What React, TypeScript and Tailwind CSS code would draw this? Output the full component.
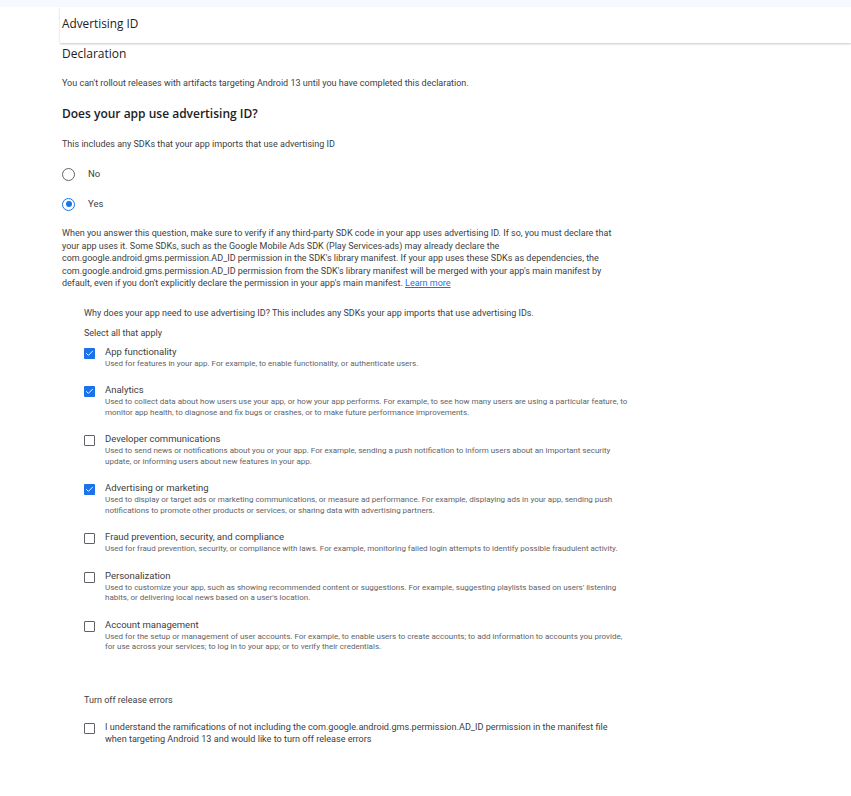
import { Check } from "lucide-react"

interface Purpose {
  title: string
  desc: string
  checked: boolean
}

const purposes: Purpose[] = [
  {
    title: "App functionality",
    desc: "Used for features in your app. For example, to enable functionality, or authenticate users.",
    checked: true,
  },
  {
    title: "Analytics",
    desc: "Used to collect data about how users use your app, or how your app performs. For example, to see how many users are using a particular feature, to monitor app health, to diagnose and fix bugs or crashes, or to make future performance improvements.",
    checked: true,
  },
  {
    title: "Developer communications",
    desc: "Used to send news or notifications about you or your app. For example, sending a push notification to inform users about an important security update, or informing users about new features in your app.",
    checked: false,
  },
  {
    title: "Advertising or marketing",
    desc: "Used to display or target ads or marketing communications, or measure ad performance. For example, displaying ads in your app, sending push notifications to promote other products or services, or sharing data with advertising partners.",
    checked: true,
  },
  {
    title: "Fraud prevention, security, and compliance",
    desc: "Used for fraud prevention, security, or compliance with laws. For example, monitoring failed login attempts to identify possible fraudulent activity.",
    checked: false,
  },
  {
    title: "Personalization",
    desc: "Used to customize your app, such as showing recommended content or suggestions. For example, suggesting playlists based on users' listening habits, or delivering local news based on a user's location.",
    checked: false,
  },
  {
    title: "Account management",
    desc: "Used for the setup or management of user accounts. For example, to enable users to create accounts; to add information to accounts you provide, for use across your services; to log in to your app; or to verify their credentials.",
    checked: false,
  },
]

function Box({ checked }: { checked: boolean }) {
  return checked ? (
    <span className="w-[11px] h-[11px] rounded-[1px] bg-[#1a73e8] flex items-center justify-center shrink-0 mt-[2px]">
      <Check size={9} strokeWidth={2.5} className="text-white" />
    </span>
  ) : (
    <span className="w-[11px] h-[11px] rounded-[1px] border-[1.5px] border-[#5f6368] shrink-0 mt-[2px]" />
  )
}

function Radio({ checked, label }: { checked: boolean; label: string }) {
  return (
    <div className="flex items-center h-[30px]">
      <span
        className={`w-[13px] h-[13px] rounded-full border-[1.5px] flex items-center justify-center ml-[62px] ${
          checked ? "border-[#1a73e8]" : "border-[#5f6368]"
        }`}
      >
        {checked && <span className="w-[6px] h-[6px] rounded-full bg-[#1a73e8]" />}
      </span>
      <span className="ml-[13px] text-[9.5px] text-[#3c4043]">{label}</span>
    </div>
  )
}

export default function App() {
  return (
    <div className="w-[851px] h-[796px] bg-white font-['Roboto',sans-serif] text-[#3c4043] overflow-hidden">
      <div className="h-[7px] bg-[#f8f9fe]" />
      <div className="ml-[60px] h-[36px] flex items-center pl-[2px] pb-[3px] bg-white shadow-[0_1px_2px_rgba(0,0,0,0.22)]">
        <span className="font-['Open_Sans',sans-serif] text-[11.8px] text-[#202124]">Advertising ID</span>
      </div>

      <div className="pl-[62px] pr-[230px]">
        <div className="font-['Open_Sans',sans-serif] text-[12px] text-[#202124] mt-[2px] leading-[18px]">
          Declaration
        </div>
        <p className="text-[9px] mt-[14px] leading-[12px]">
          You can't rollout releases with artifacts targeting Android 13 until you have completed this declaration.
        </p>
        <h2 className="font-['Open_Sans',sans-serif] text-[12px] font-semibold text-[#202124] mt-[17px] leading-[16px]">
          Does your app use advertising ID?
        </h2>
        <p className="text-[9px] mt-[16px] leading-[12px]">
          This includes any SDKs that your app imports that use advertising ID
        </p>
      </div>

      <div className="mt-[9px]">
        <Radio checked={false} label="No" />
        <Radio checked={true} label="Yes" />
      </div>

      <p className="pl-[62px] pr-[230px] text-[9px] leading-[12.6px] mt-[8px]">
        When you answer this question, make sure to verify if any third-party SDK code in your app uses advertising ID. If so, you must declare that your app uses it. Some SDKs, such as the Google Mobile Ads SDK (Play Services-ads) may already declare the com.google.android.gms.permission.AD_ID permission in the SDK's library manifest. If your app uses these SDKs as dependencies, the com.google.android.gms.permission.AD_ID permission from the SDK's library manifest will be merged with your app's main manifest by default, even if you don't explicitly declare the permission in your app's main manifest.{" "}
        <span className="text-[#1a73e8] underline">Learn more</span>
      </p>

      <div className="pl-[84px] pr-[222px]">
        <p className="text-[9px] leading-[12px] mt-[17px]">
          Why does your app need to use advertising ID? This includes any SDKs your app imports that use advertising IDs.
        </p>
        <p className="text-[9px] leading-[12px] mt-[8px]">Select all that apply</p>

        <div className="mt-[7px] flex flex-col gap-[15px]">
          {purposes.map((p) => (
            <div key={p.title} className="flex gap-[10px]">
              <Box checked={p.checked} />
              <div>
                <div className="text-[9.5px] leading-[12px] text-[#3c4043]">{p.title}</div>
                <div className="text-[8px] leading-[10.5px] text-[#5f6368] mt-[1px]">{p.desc}</div>
              </div>
            </div>
          ))}
        </div>

        <p className="text-[9px] leading-[12px] mt-[41px]">Turn off release errors</p>
        <div className="flex gap-[10px] mt-[15px]">
          <Box checked={false} />
          <div className="text-[9.1px] leading-[12px]">
            I understand the ramifications of not including the com.google.android.gms.permission.AD_ID permission in the manifest file when targeting Android 13 and would like to turn off release errors
          </div>
        </div>
      </div>
    </div>
  )
}
